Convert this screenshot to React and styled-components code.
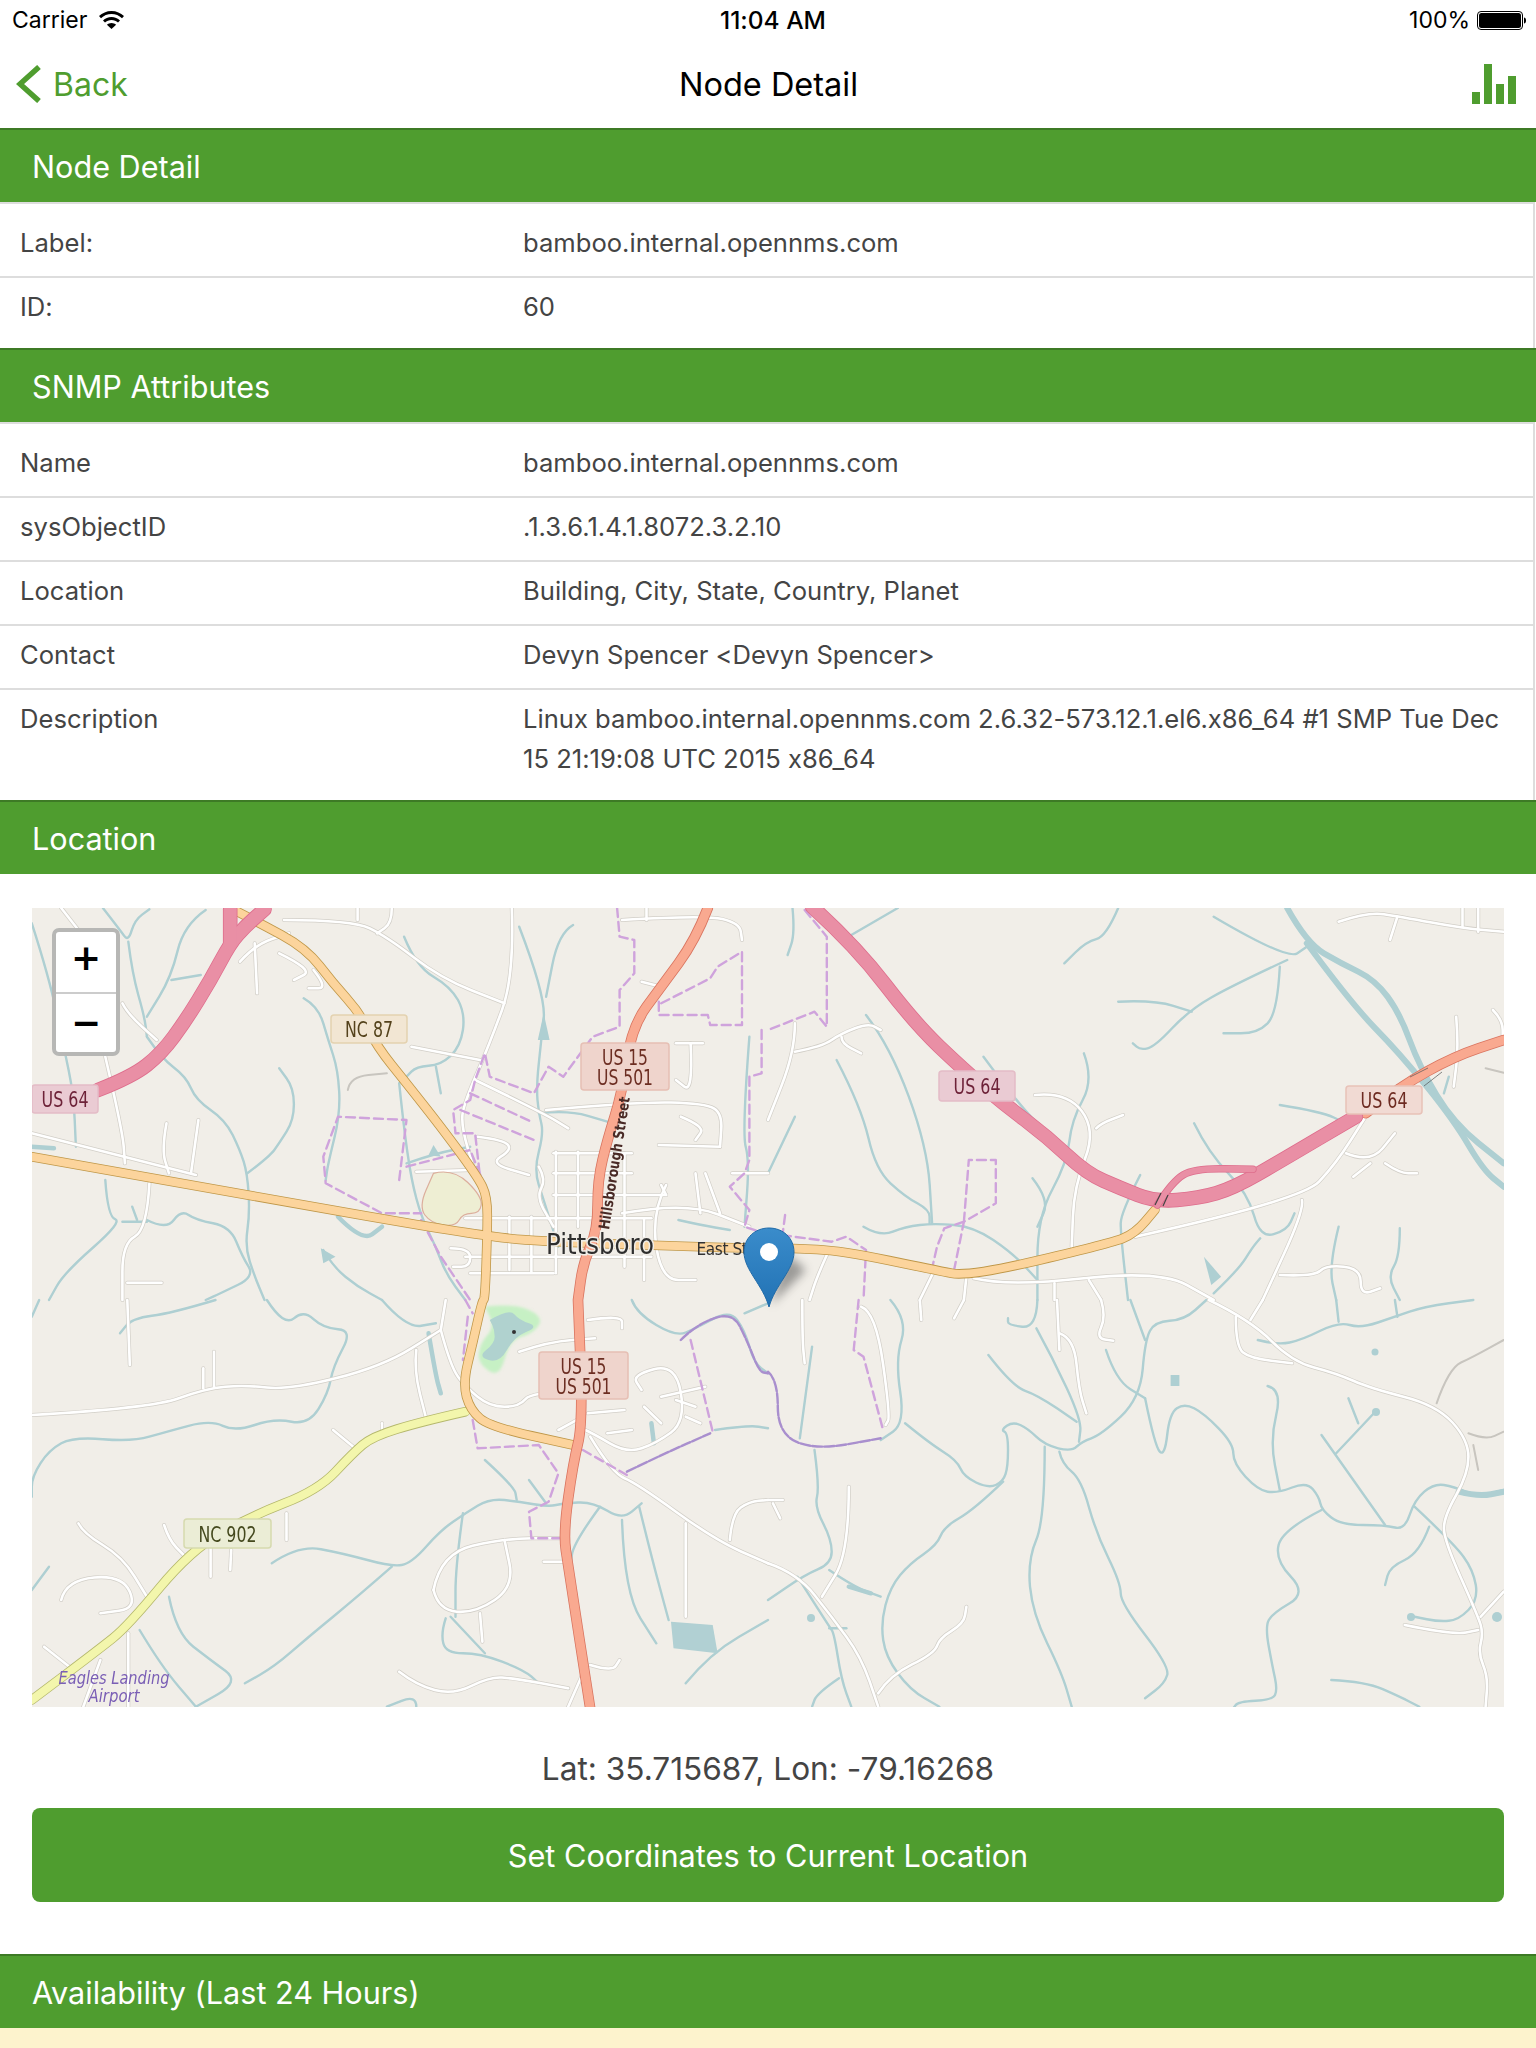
import React from 'react'
import styled, { createGlobalStyle } from 'styled-components'

const GlobalStyle = createGlobalStyle`
  html, body {
    margin: 0;
    padding: 0;
    background: #fff;
    font-family: Inter, "Liberation Sans", sans-serif;
    font-feature-settings: "calt" 0;
  }
`

const Page = styled.div`
  width: 1536px;
  height: 2048px;
  overflow: hidden;
  background: #fff;
`
const StatusBar = styled.div`
  height: 40px;
  display: grid;
  grid-template-columns: 1fr auto 1fr;
  align-items: center;
  padding: 0 10px 0 12px;
  font-size: 23px;
  color: #000;
`
const StatusLeft = styled.div`
  display: flex;
  align-items: center;
  gap: 12px;
`
const StatusRight = styled.div`
  display: flex;
  align-items: center;
  justify-content: flex-end;
  gap: 7px;
`
const Clock = styled.div`
  margin-left: 8px;
  font-size: 24.5px;
  font-weight: 500;
`
const NavBar = styled.div`
  height: 88px;
  display: grid;
  grid-template-columns: 1fr auto 1fr;
  align-items: center;
  padding: 0 20px 0 16px;
`
const BackLink = styled.div`
  display: flex;
  align-items: center;
  gap: 12px;
  font-size: 32px;
  color: #4f9d2f;
`
const Title = styled.div`
  margin-left: 5px;
  font-size: 32.5px;
  color: #000;
`
const NavIcon = styled.div`
  display: flex;
  justify-content: flex-end;
`
const SectionHeader = styled.div`
  height: 72px;
  display: flex;
  align-items: center;
  padding-left: 32px;
  background: #4f9d2f;
  border-top: 2px solid #3d7a25;
  color: #fff;
  font-size: 30.6px;
`
const List = styled.div`
  padding: 10px 0 8px;
  border-top: 2px solid #ddd;
  border-right: 2px solid #ddd;
  margin-right: 1px;
`
const Row = styled.div`
  display: grid;
  grid-template-columns: 503px 1fr;
  padding: 9px 20px 13px;
  font-size: 25.6px;
  line-height: 40px;
  color: #444;
  border-bottom: 2px solid #ddd;
  &:last-child {
    border-bottom: 0;
  }
`
const LocationBody = styled.div`
  padding: 34px 32px 52px;
  display: flex;
  flex-direction: column;
`
const MapFrame = styled.div`
  position: relative;
  height: 799px;
  overflow: hidden;
  background: #f1eee8;
`
const MapSvg = styled.svg`
  display: block;
  width: 100%;
  height: 100%;
`
const ZoomControl = styled.div`
  position: absolute;
  left: 20px;
  top: 20px;
  width: 60px;
  border: 4px solid #b7b7b5;
  border-radius: 7px;
  background: #fff;
`
const ZoomButton = styled.div`
  height: 60px;
  padding-bottom: 2px;
  box-sizing: border-box;
  display: flex;
  align-items: center;
  justify-content: center;
  font-family: "DejaVu Sans", sans-serif;
  font-weight: 700;
  font-size: 36px;
  color: #000;
  &:first-child {
    padding-bottom: 9px;
  }
  & + & {
    border-top: 2px solid #ccc;
  }
`
const Coordinates = styled.div`
  margin-top: 41px;
  height: 42px;
  line-height: 42px;
  text-align: center;
  font-size: 31.6px;
  color: #444;
`
const SetButton = styled.div`
  margin-top: 18px;
  height: 94px;
  display: flex;
  align-items: center;
  justify-content: center;
  border-radius: 8px;
  background: #4f9d2f;
  color: #fff;
  font-size: 30.7px;
`
const YellowPanel = styled.div`
  height: 20px;
  background: #fdf3cd;
`

// map geometry is read off the zoomed crops: a,b,c,d are the four crops, each
// with its own origin and horizontal squeeze
const ORIGIN = { a: [0, 880], b: [768, 880], c: [0, 1300], d: [768, 1300] }
const SX = 768 / 1568
const MAP_FONT = '"DejaVu Sans Condensed", "DejaVu Sans", sans-serif'

const toPoints = (str) => {
  let q = ORIGIN.a
  const pts = []
  str.split(' ').forEach((tok) => {
    if (ORIGIN[tok]) {
      q = ORIGIN[tok]
      return
    }
    const [x, y] = tok.split(',').map(Number)
    pts.push([+(q[0] + x * SX).toFixed(1), +(q[1] + y / 3).toFixed(1)])
  })
  return pts
}

const toPath = (str) => {
  const p = toPoints(str)
  let d = `M${p[0][0]} ${p[0][1]}`
  for (let i = 1; i < p.length - 1; i++) {
    const mx = ((p[i][0] + p[i + 1][0]) / 2).toFixed(1)
    const my = ((p[i][1] + p[i + 1][1]) / 2).toFixed(1)
    d += `Q${p[i][0]} ${p[i][1]} ${mx} ${my}`
  }
  const last = p[p.length - 1]
  return `${d}L${last[0]} ${last[1]}`
}

const toPolyline = (str) => `M${toPoints(str).join('L')}`

const water = [
  'a 210,84 245,150 262,185 275,120 305,88',
  'a 262,185 270,280 295,410 300,470',
  'a 420,90 375,135 350,290 300,410',
  'a 350,300 410,285',
  'a 65,130 100,290 130,500 150,640 155,800',
  'a 300,470 330,535 380,590 400,660 460,720 490,810 505,880 510,1000 500,1100 520,1190 540,1260',
  'a 505,880 550,830 570,790 600,720 600,625 570,565',
  'a 620,355 650,380 670,480 690,570 695,700 670,850 665,900',
  'a 825,170 850,260 920,320 950,400 940,500 900,555 850,560 830,590',
  'a 890,560 900,640',
  'a 1060,140 1115,350 1105,480 1095,620 1100,700 1110,760 1090,870 1110,960 1140,1100',
  'a 1170,135 1140,160 1115,350',
  'a 815,610 825,750 840,900 860,1010 890,1100 910,1180 950,1260',
  'a 830,850 890,820 960,800',
  'a 215,900 220,1010 250,1025 130,1180 100,1260',
  'a 250,1025 300,1025',
  'a 270,980 280,1020',
  'a 300,1020 340,1050 370,990 400,1020 470,1040 495,1130 520,1190 450,1240 420,1260',
  'a 660,1110 680,1160 730,1220 780,1260',
  'a 1530,470 1515,760 1530,840 1520,1040',
  'a 1100,700 1160,690 1240,725',
  'a 1385,1020 1430,1035 1490,1050',
  'c 440,0 350,40 270,55 245,100',
  'c 65,50 80,0',
  'c 545,0 580,80 620,30 660,85 720,90 680,200 670,280 630,375 560,355 480,395 430,360 340,395 270,425 150,410 100,450 65,530 65,590',
  'c 780,0 830,85 890,70',
  'c 100,800 65,870',
  'c 345,890 360,1000 430,1080 490,1145 400,1220',
  'c 285,990 330,1100 400,1220',
  'c 555,790 610,735 700,760 800,800 840,790 900,690 950,640 1000,595 1060,605 1120,620 1150,610 1210,605 1270,660 1310,610',
  'c 800,800 730,890 630,1010 560,1100 500,1150',
  'c 945,640 930,800 930,950',
  'c 910,955 900,1000 910,1060 980,1060 1070,1110 1100,1150',
  'c 920,950 990,1060',
  'c 990,480 1050,560 1055,600',
  'c 1080,540 1115,610',
  'c 1270,660 1275,880 1340,1030',
  'c 1305,620 1330,770 1365,960',
  'c 1460,390 1530,375 1568,385',
  'c 1400,1150 1450,1060 1568,960',
  'c 1225,620 1170,730 1165,800',
  'c 1290,0 1300,40 1380,110 1420,85 1490,30 1520,90 1540,190 1568,220',
  'c 1520,40 1568,10',
  'c 850,1220 850,1185 790,1220',
  'b 50,84 55,160 40,225',
  'b 265,84 170,165',
  'b 715,84 690,170 650,185 605,250',
  'b 910,110 1060,240 1100,200',
  'b 1060,240 950,315 860,390 790,500 760,510 745,490',
  'b 715,365 790,360 865,395',
  'b 1045,260 1040,400 1000,460 930,460',
  'b 440,530 510,670 570,760',
  'b 645,520 665,600 620,720 610,850 550,1010 550,1260',
  'b 540,895 575,960 550,1040',
  'b 140,540 190,680 220,870 280,950 330,990 330,1030',
  'b 200,405 250,500 325,800 335,1030',
  'b 55,710 0,880',
  'b 870,730 900,820 980,940 1005,1075 1060,1050 1075,1000',
  'b 760,885 720,1000 720,1060 735,1260',
  'b 195,1040 230,1070 280,1040 340,1030 420,1040 500,1120 550,1200',
  'b 1165,1040 1145,1160 1160,1260',
  'b 1290,1045 1290,1130 1265,1190 1290,1260',
  'b 1045,675 1130,695 1180,730',
  'b 1390,590 1380,640',
  'b 910,1240 960,1170 990,1100 1005,1075',
  'd 250,0 285,60 260,180 280,370 230,420',
  'd 280,370 330,430 385,480 400,530 450,565 480,545 490,500 490,400 475,390 500,365 530,385 565,435 620,455 640,425 680,405 760,295 770,120 790,65 850,60 895,0',
  'd 740,0 770,120',
  'd 550,0 548,85 490,75 490,55',
  'd 548,85 580,170 640,360 635,425',
  'd 450,165 500,260 550,285 630,365',
  'd 565,440 565,660 530,780 540,940 600,1120 620,1220',
  'd 595,455 600,490 640,540 670,700 720,850 720,910 820,1100 810,1150 770,1195',
  'd 480,545 420,630 360,680 345,735 290,790 250,860 230,970 240,1070 290,1170 350,1220',
  'd 95,450 105,560 95,620 130,720 130,790 75,825 0,900',
  'd 125,810 175,860 230,890',
  'd 65,415 90,140',
  'd 690,150 710,240 770,295',
  'd 770,295 790,440 810,470 820,340 850,310 890,340 950,430 950,490 1000,570 1040,580 1100,545 1125,590 1130,630 1170,675 1260,675 1300,690 1320,600 1360,550 1400,560 1450,590 1502,570',
  'd 1020,258 1050,270 1025,420 1045,570',
  'd 1130,405 1260,675',
  'd 1160,460 1240,335',
  'd 1185,295 1205,370',
  'd 1130,630 1050,690 1035,780 1100,880 1030,940 1015,980 1030,1100 1040,1170 1030,1200 960,1205 950,1225',
  'd 1320,620 1400,730 1440,810 1450,900 1410,960 1370,965 1320,950',
  'd 1350,680 1330,760 1270,800 1260,855',
  'd 1150,1140 1220,1145 1290,1190 1330,1220',
  'd 60,830 125,980 135,1000 150,1140 170,1220',
  'd 125,985 160,985',
  'd 145,1135 100,1180 90,1220',
  'd 1000,120 1040,135 1090,120 1165,65 1210,85 1280,50 1340,20 1440,0',
  'd 1165,65 1160,0',
  'd 1285,50 1280,0',
]

// wider streams and the two river arms
const waterThick = [
  'a 690,1010 740,1085 780,1040',
  'c 875,100 890,230 900,280',
  'c 1330,370 1335,430',
  'a 65,800 110,805',
  'd 165,860 210,880',
]
const river = [
  'b 1060,84 1100,190 1170,250 1240,300 1290,400 1330,560 1400,730 1502,850',
  'b 1100,190 1190,370 1290,520 1400,720 1460,870 1502,920',
  'd 1410,575 1450,590 1502,575',
]

const roads = [
  'a 125,84 160,150',
  'a 580,120 720,120 790,170 900,295 1030,370',
  'a 1045,84 1050,290 1000,490 950,660 940,730 970,880',
  'a 730,84 730,120',
  'a 800,84 800,130 770,160',
  'a 520,190 525,340',
  'a 490,245 520,195 590,160',
  'a 570,220 640,270 600,300',
  'a 640,270 670,325 630,325',
  'a 840,500 980,540',
  'a 250,370 260,400 320,480',
  'a 215,530 250,750 255,850',
  'a 65,760 400,885',
  'a 340,730 330,810 345,880',
  'a 405,720 390,880',
  'a 305,910 300,1050 250,1090 250,1260',
  'a 260,1208 330,1208',
  'a 970,600 1110,700 1160,745',
  'a 960,1180 1130,1180',
  'a 1380,490 1435,490',
  'a 1410,490 1415,640 1380,600',
  'a 1115,690 1300,665 1440,670 1475,700 1470,800',
  'a 1345,795 1470,800',
  'a 1390,710 1440,740 1420,780',
  'a 1310,305 1350,320',
  'a 1270,1000 1400,965 1530,1040',
  'a 1495,880 1568,880',
  'a 975,770 1030,780 1045,810 1000,850 1080,885',
  'a 850,875 960,870',
  'a 1420,880 1430,1000',
  'a 1360,915 1330,1000 1350,1200 1420,1200',
  'a 1100,860 1115,900 1095,950 1130,1040',
  'a 1270,120 1440,105 1510,130 1515,180',
  'a 1320,84 1320,120',
  // town grid
  'a 950,1015 1330,1015',
  'a 1130,820 1290,820',
  'a 1130,880 1290,880',
  'a 1130,945 1360,945',
  'a 950,1130 1330,1130',
  'a 920,1105 960,1105 960,1160 925,1160',
  'a 1040,1010 1040,1170',
  'a 1085,1010 1085,1175',
  'a 1135,815 1135,1180',
  'a 1180,815 1180,1040',
  'a 1275,820 1275,1160',
  'a 1315,1020 1315,1200',
  'a 1350,915 1360,945',
  'a 1440,880 1470,1000',
  'c 1200,60 1270,45 1270,85',
  'c 65,345 310,325 420,265 500,255 590,270 780,200 900,90',
  'c 260,0 265,195',
  'c 415,205 415,265',
  'c 437,155 437,260',
  'c 850,150 845,210 870,355',
  'c 900,90 910,0',
  'c 900,90 920,200 950,260 1000,320 1060,320 1085,275 1270,275',
  'c 680,390 725,445',
  'c 780,370 780,395',
  'c 160,670 170,700 250,770 300,890',
  'c 125,900 135,840 250,825 280,925 205,940',
  'c 335,675 345,720 375,765',
  'c 430,745 430,830',
  'c 472,750 470,810',
  'c 585,640 585,720',
  'c 90,1040 150,1110',
  'c 205,1080 170,1220',
  'c 262,1000 262,1220',
  'c 885,870 900,760 1030,715 1145,715',
  'c 885,870 895,930 970,940 1050,860 1030,720',
  'c 980,940 985,1025',
  'c 1110,785 1150,785',
  'c 815,1115 850,1155 925,1185 1000,1130 1050,1135 1160,1165',
  'c 1160,1220 1190,1120',
  'c 1205,1095 1250,1115 1265,1080',
  'c 1195,390 1210,400 1280,460 1340,430 1400,365 1380,190 1290,225 1310,270',
  'c 1350,290 1440,260',
  'c 1380,300 1420,320',
  'c 1400,350 1430,370',
  'c 1315,320 1350,370',
  'c 1205,410 1250,520 1300,550 1460,720 1568,790',
  'c 1060,155 1120,125 1215,115',
  'c 1400,670 1400,950',
  'c 1490,720 1495,640 1530,605 1568,600',
  'c 1140,390 1190,350',
  'c 1200,340 1275,330',
  'c 1240,400 1290,390',
  'b 1165,125 1225,95 1290,110 1420,145 1502,155',
  'b 1285,110 1270,180',
  'b 1418,84 1418,140',
  'b 1450,84 1450,155',
  'b 55,430 55,515 0,720',
  'b 55,515 110,500 150,460 205,430 230,450',
  'b 150,470 150,490 190,520',
  'b 545,645 610,635 670,750 625,920 620,1100',
  'b 670,745 680,730 725,705',
  'b 750,1070 1090,960 1160,850 1220,710',
  'b 1090,960 1095,990 1010,1260',
  'b 1180,820 1230,850 1280,760',
  'b 1230,850 1195,890',
  'b 1260,850 1290,880 1325,880',
  'b 420,1195 490,1220 800,1170 910,1260',
  'b 120,1125 100,1190 85,1260',
  'b 1045,1185 1115,1190 1140,1155 1210,1165 1210,1245 1250,1225',
  'b 1405,410 1410,500 1400,620',
  'b 1480,390 1500,420 1500,480',
  'b 405,1190 400,1260',
  'b 340,1170 310,1260',
  'b 585,1210 585,1260',
  'b 655,1200 680,1260',
  'd 0,790 60,820 130,950 190,1070 225,1220',
  'd 225,1180 250,1125 340,1060 350,1015 400,970 405,920',
  'd 165,560 165,760 110,890',
  'd 70,0 70,120 75,190',
  'd 310,0 313,60',
  'd 400,0 380,55',
  'd 590,0 595,150',
  'd 595,100 625,115 635,270 650,340',
  'd 680,0 690,50 670,115 705,122',
  'd 190,20 220,35 250,350 240,375',
  'd 900,0 985,60 1070,185 1160,220 1230,265 1365,315 1430,420 1430,520 1380,650 1380,720 1450,950 1460,1000 1450,1060 1470,1130 1465,1220',
  'd 955,50 955,140 985,175 1070,190',
  'd 1010,0 985,60',
  'd 1300,975 1400,1005 1450,990',
  'd 1502,875 1455,950',
  'd 0,600 30,600',
  'd 10,610 25,655',
]

const greyTracks = [
  'a 710,630 715,590 790,580',
  'd 1365,310 1390,205 1440,170 1502,120',
  'd 1430,400 1465,420 1502,395',
  'd 1440,435 1450,510',
  'b 1465,565 1502,578',
]

const borders = [
  'a 1260,84 1265,170 1295,180 1295,280 1265,330 1265,440 1210,470 1150,590 1120,560 1090,640 1000,590 990,520 970,600 960,660 925,690 930,760 970,760 980,890',
  'a 1350,370 1450,295 1465,260 1515,215 1515,435 1450,435 1445,405 1345,405 1345,360',
  'a 815,900 830,720 690,710 660,830 665,910 780,1000 860,1000',
  'a 860,1020 900,1130 960,1260',
  'a 940,690 1090,780',
  'a 960,640 1085,725',
  'a 830,860 960,810 985,900',
  'a 1555,450 1555,580 1530,590 1530,840 1520,880 1490,920 1530,990 1520,1040 1560,1060',
  'b 75,90 120,170 120,440 95,395 0,450',
  'b 0,1060 130,1085 160,1070 200,1110 195,1260',
  'b 400,1025 410,840 465,840 465,970 400,1025 380,1170 335,1165 345,1100 360,1045 400,1025',
  'b 35,1005 30,1060',
  'c 950,0 965,40',
  'c 965,360 975,445 1100,435 1140,520 1120,605 1080,635 1085,715 1150,715 1160,540 1170,490',
  'c 1410,120 1455,395',
  'c 1190,450 1280,525',
  'c 955,50 945,180',
  'd 185,0 175,150 195,170 235,390',
]

const outerBorders = [
  'c 1280,515 1350,465 1450,400',
  'c 1390,120 1420,75 1495,35 1525,120 1550,215 1568,220',
  'd 0,215 20,240 20,400 95,450 230,415',
]

const trunkWest = 'a 1445,84 1420,180 1350,320 1290,440 1270,640 1240,780 1220,900 1220,1050 1190,1150 1180,1260 c 1180,0 1190,370 1170,490 1150,700 1160,800 1205,1225'
const trunkEast = 'b 1220,700 1290,620 1400,530 1502,480'
const motorways = [
  'a 200,630 270,590 330,520 380,420 430,300 470,190 500,140 540,88',
  'a 470,190 470,88',
  'b 90,80 180,200 300,430 400,570 480,670 570,770 650,880 720,925 790,965 880,955 950,925 1050,840 1200,710',
]
const loopRamp = ['b 795,975 825,905 870,865 990,868']
const primaries = [
  'a 470,84 525,125 625,205 680,310 735,400 770,500 830,610 900,740 975,890 995,950 995,1060 990,1260 c 985,0 965,130 945,250 960,330 1000,380 1170,435',
  'a 65,830 500,945 990,1070 1120,1085 1420,1100 1530,1105 b 50,1105 150,1112 340,1170 410,1190 700,1090 750,1060 790,990',
]
const secondary = 'c 950,335 860,365 760,410 720,460 650,570 510,650 390,750 260,980 200,1050 65,1200'

const Stroke = ({ list, color, width, dash, straight }) => (
  <g fill="none" stroke={color} strokeWidth={width} strokeLinecap="round" strokeLinejoin="round" strokeDasharray={dash}>
    {list.map((s, i) => <path key={i} d={straight ? toPolyline(s) : toPath(s)} />)}
  </g>
)

const Road = ({ list, casing, fill, width }) => (
  <>
    <Stroke list={list} color={casing} width={width + 1.6} />
    <Stroke list={list} color={fill} width={width} />
  </>
)

const Shield = ({ x, y, w, h, fill, edge, color, lines }) => (
  <g>
    <rect x={x} y={y} width={w} height={h} rx="3" fill={fill} stroke={edge} strokeWidth="1.5" />
    {lines.map((line, i) => (
      <text
        key={line.t}
        x={x + w / 2}
        y={lines.length > 1 ? y + 22 + i * 20 : y + h / 2 + 8}
        textAnchor="middle"
        textLength={line.w}
        lengthAdjust="spacingAndGlyphs"
        fontFamily={MAP_FONT}
        fontSize="21"
        fill={color}
      >
        {line.t}
      </text>
    ))}
  </g>
)

const US64 = [{ t: 'US 64', w: 47 }]
const US15 = [{ t: 'US 15', w: 46 }, { t: 'US 501', w: 56 }]

const CityMap = () => (
  <MapSvg viewBox="32 908 1472 799" xmlns="http://www.w3.org/2000/svg">
    <defs>
      <filter id="soft" x="-2%" y="-2%" width="104%" height="104%">
        <feGaussianBlur stdDeviation="0.45" />
      </filter>
      <filter id="pinShadow" x="-50%" y="-50%" width="200%" height="200%">
        <feGaussianBlur stdDeviation="5" />
      </filter>
      <filter id="lakeGlow" x="-20%" y="-20%" width="140%" height="140%">
        <feGaussianBlur stdDeviation="1.5" />
      </filter>
      <linearGradient id="pinFill" x1="0" y1="0" x2="0" y2="1">
        <stop offset="0" stopColor="#3a8ccb" />
        <stop offset="1" stopColor="#2272b4" />
      </linearGradient>
    </defs>
    <rect x="32" y="908" width="1472" height="799" fill="#f1eee8" />
    <g filter="url(#soft)">
      <Stroke list={water} color="#aecfd2" width={2.4} />
      <Stroke list={waterThick} color="#aecfd2" width={4.5} />
      <Stroke list={river} color="#aecfd2" width={6} />
      <g fill="#aecfd2">
        <path d={`${toPolyline('c 1370,965 1455,975 1465,1060 1375,1045')}Z`} fill="#b1d0d3" />
        <path d={`${toPolyline('d 822,225 840,225 840,258 822,258')}Z`} />
        <circle cx="1497" cy="1617" r="5" />
        <circle cx="811" cy="1618" r="4" />
        <circle cx="1411" cy="1617" r="4" />
        <circle cx="1375" cy="1352" r="3.5" />
        <circle cx="1376" cy="1412" r="4" />
        <path d={`${toPolyline('b 890,1130 925,1190 905,1215')}Z`} />
        <path d={`${toPolyline('a 1110,400 1122,480 1098,480')}Z`} />
        <path d={`${toPolyline('a 655,1105 685,1130 660,1150')}Z`} />
        <path d={`${toPolyline('a 885,795 900,830 875,825')}Z`} />
      </g>
      <Stroke list={greyTracks} color="#c8c5bf" width={2} />
      <Stroke list={roads} color="#d2cfc8" width={4} />
      <Stroke list={roads} color="#ffffff" width={2.6} />
      <Stroke list={borders} color="#cfa3dc" width={2.4} dash="9 5" straight />
      <Stroke list={outerBorders} color="#a98fce" width={2.4} dash="10 2" />
      <path d={`${toPath('c 990,20 1050,10 1110,50 1090,100 1040,120 1020,235 975,190 980,130 1010,80 990,20')}Z`} fill="#c6f0c4" filter="url(#lakeGlow)" />
      <path d={`${toPath('c 1000,60 1040,25 1060,60 1100,80 1050,110 1020,190 975,170 1010,130 1010,90 1000,60')}Z`} fill="#b0d2cf" />
      <circle cx="514" cy="1332" r="2" fill="#333" />
      <path d={`${toPath('a 885,880 925,865 985,950 980,1000 945,1000 930,1040 880,1030 855,980 885,880')}Z`} fill="#eeeed3" stroke="#dcae9c" strokeWidth="1.2" />
      <Road list={[secondary]} casing="#b5b86d" fill="#f3f6ac" width={8} />
      <Road list={primaries} casing="#bf9748" fill="#fcd49c" width={8} />
      <Road list={[trunkWest, trunkEast]} casing="#d9745f" fill="#f9a990" width={9} />
      <Road list={motorways} casing="#de6d8c" fill="#e98fa5" width={13} />
      <Road list={loopRamp} casing="#de6d8c" fill="#e98fa5" width={6} />
      <path d={`${toPolyline('b 850,925 885,885 930,885 895,915')}Z`} fill="#f1eee8" />
      <path d="M1161 1193 L1155 1205 M1168 1195 L1163 1206" stroke="#444" strokeWidth="1.2" />
      <path d="M1410 1077 L1428 1068 M1424 1086 L1442 1072" stroke="#555" strokeWidth="1" opacity="0.7" />
      <text
        transform="translate(609 1230) rotate(-81)"
        textLength="134"
        lengthAdjust="spacingAndGlyphs"
        fontFamily={MAP_FONT}
        fontWeight="700"
        fontSize="15"
        fill="#4a2b26"
      >
        Hillsborough Street
      </text>
      <Shield x={32} y={1085} w={66} h={28} fill="#eacbd3" edge="#e4bcc7" color="#6d2238" lines={US64} />
      <Shield x={331} y={1015} w={76} h={28} fill="#f2e6d3" edge="#e4d2b0" color="#54431b" lines={[{ t: 'NC 87', w: 48 }]} />
      <Shield x={581} y={1043} w={88} h={47} fill="#efd4cc" edge="#e6bfb4" color="#6c2d22" lines={US15} />
      <Shield x={939} y={1071} w={76} h={30} fill="#eacbd3" edge="#e4bcc7" color="#6d2238" lines={US64} />
      <Shield x={1346} y={1086} w={76} h={28} fill="#f1dad3" edge="#e8c2b8" color="#6d2b20" lines={US64} />
      <Shield x={539} y={1352} w={89} h={47} fill="#efd4cc" edge="#e6bfb4" color="#6c2d22" lines={US15} />
      <Shield x={184} y={1519} w={87} h={29} fill="#ebedd6" edge="#d6daaf" color="#44491f" lines={[{ t: 'NC 902', w: 58 }]} />
      <text
        x="600"
        y="1254"
        textAnchor="middle"
        textLength="108"
        lengthAdjust="spacingAndGlyphs"
        fontFamily={MAP_FONT}
        fontSize="28"
        fill="#2f2f2f"
        stroke="#f1eee8"
        strokeWidth="3"
        paintOrder="stroke"
      >
        Pittsboro
      </text>
      <text
        x="722"
        y="1255"
        textAnchor="middle"
        fontFamily={MAP_FONT}
        fontSize="17"
        letterSpacing="-0.4"
        fill="#333"
      >
        East St
      </text>
      <text
        x="114"
        y="1684"
        textAnchor="middle"
        textLength="111"
        lengthAdjust="spacingAndGlyphs"
        fontFamily={MAP_FONT}
        fontStyle="italic"
        fontSize="18"
        fill="#7a5eb5"
      >
        Eagles Landing
      </text>
      <text
        x="114"
        y="1702"
        textAnchor="middle"
        textLength="51"
        lengthAdjust="spacingAndGlyphs"
        fontFamily={MAP_FONT}
        fontStyle="italic"
        fontSize="18"
        fill="#7a5eb5"
      >
        Airport
      </text>
    </g>
    <path d="M771 1305 L806 1270 L790 1256 L782 1266 Z" fill="#555" opacity="0.55" filter="url(#pinShadow)" />
    <path
      d="M769 1307 C763 1285 744 1270 744 1252 C744 1238 755 1228 769 1228 C783 1228 794 1238 794 1252 C794 1270 775 1285 769 1307 Z"
      fill="url(#pinFill)"
      stroke="#1f6aa8"
      strokeWidth="1"
    />
    <circle cx="769" cy="1252" r="9" fill="#fff" />
  </MapSvg>
)

const Wifi = () => (
  <svg width="25" height="18" viewBox="0 0 25 18" fill="#000">
    <path d="M12.5 0C7.6 0 3.3 2 0 5l2 2.2C4.8 4.6 8.5 3 12.5 3s7.7 1.6 10.5 4.2L25 5C21.7 2 17.4 0 12.5 0z" />
    <path d="M12.5 6C9.2 6 6.2 7.3 4 9.4l2 2.2c1.7-1.6 4-2.6 6.5-2.6s4.8 1 6.5 2.6l2-2.2C18.8 7.3 15.8 6 12.5 6z" />
    <path d="M12.5 12c-1.8 0-3.4.7-4.6 1.8l4.6 4.2 4.6-4.2c-1.2-1.1-2.8-1.8-4.6-1.8z" />
  </svg>
)

const Battery = () => (
  <svg width="49" height="19" viewBox="0 0 49 19">
    <rect x="0.5" y="0.5" width="45" height="18" rx="3.5" fill="none" stroke="#000" />
    <rect x="2" y="2" width="42" height="15" rx="2.5" fill="#000" />
    <path d="M47 6.5c1.2 0 2 1.2 2 3s-.8 3-2 3z" fill="#000" />
  </svg>
)

const BackChevron = () => (
  <svg width="25" height="38" viewBox="0 0 25 38" fill="none" stroke="#4f9d2f" strokeWidth="5.5">
    <path d="M23 2 L4 19 L23 36" />
  </svg>
)

const BarsIcon = () => (
  <svg width="44" height="40" viewBox="0 0 44 40" fill="#4f9d2f">
    <rect x="0" y="28" width="8" height="12" />
    <rect x="12" y="0" width="8" height="40" />
    <rect x="24" y="20" width="8" height="20" />
    <rect x="36" y="12" width="8" height="28" />
  </svg>
)

const App = () => {
  return (
    <Page>
      <GlobalStyle />
      <StatusBar>
        <StatusLeft>Carrier <Wifi /></StatusLeft>
        <Clock>11:04 AM</Clock>
        <StatusRight>100% <Battery /></StatusRight>
      </StatusBar>
      <NavBar>
        <BackLink><BackChevron /> Back</BackLink>
        <Title>Node Detail</Title>
        <NavIcon><BarsIcon /></NavIcon>
      </NavBar>

      <SectionHeader>Node Detail</SectionHeader>
      <List>
        <Row><span>Label:</span><span>bamboo.internal.opennms.com</span></Row>
        <Row><span>ID:</span><span>60</span></Row>
      </List>

      <SectionHeader>SNMP Attributes</SectionHeader>
      <List>
        <Row><span>Name</span><span>bamboo.internal.opennms.com</span></Row>
        <Row><span>sysObjectID</span><span>.1.3.6.1.4.1.8072.3.2.10</span></Row>
        <Row><span>Location</span><span>Building, City, State, Country, Planet</span></Row>
        <Row><span>Contact</span><span>Devyn Spencer &lt;Devyn Spencer&gt;</span></Row>
        <Row><span>Description</span><span>Linux bamboo.internal.opennms.com 2.6.32-573.12.1.el6.x86_64 #1 SMP Tue Dec 15 21:19:08 UTC 2015 x86_64</span></Row>
      </List>

      <SectionHeader>Location</SectionHeader>
      <LocationBody>
        <MapFrame>
          <CityMap />
          <ZoomControl>
            <ZoomButton>+</ZoomButton>
            <ZoomButton>−</ZoomButton>
          </ZoomControl>
        </MapFrame>
        <Coordinates>Lat: 35.715687, Lon: -79.16268</Coordinates>
        <SetButton>Set Coordinates to Current Location</SetButton>
      </LocationBody>

      <SectionHeader>Availability (Last 24 Hours)</SectionHeader>
      <YellowPanel />
    </Page>
  )
}

export default App
